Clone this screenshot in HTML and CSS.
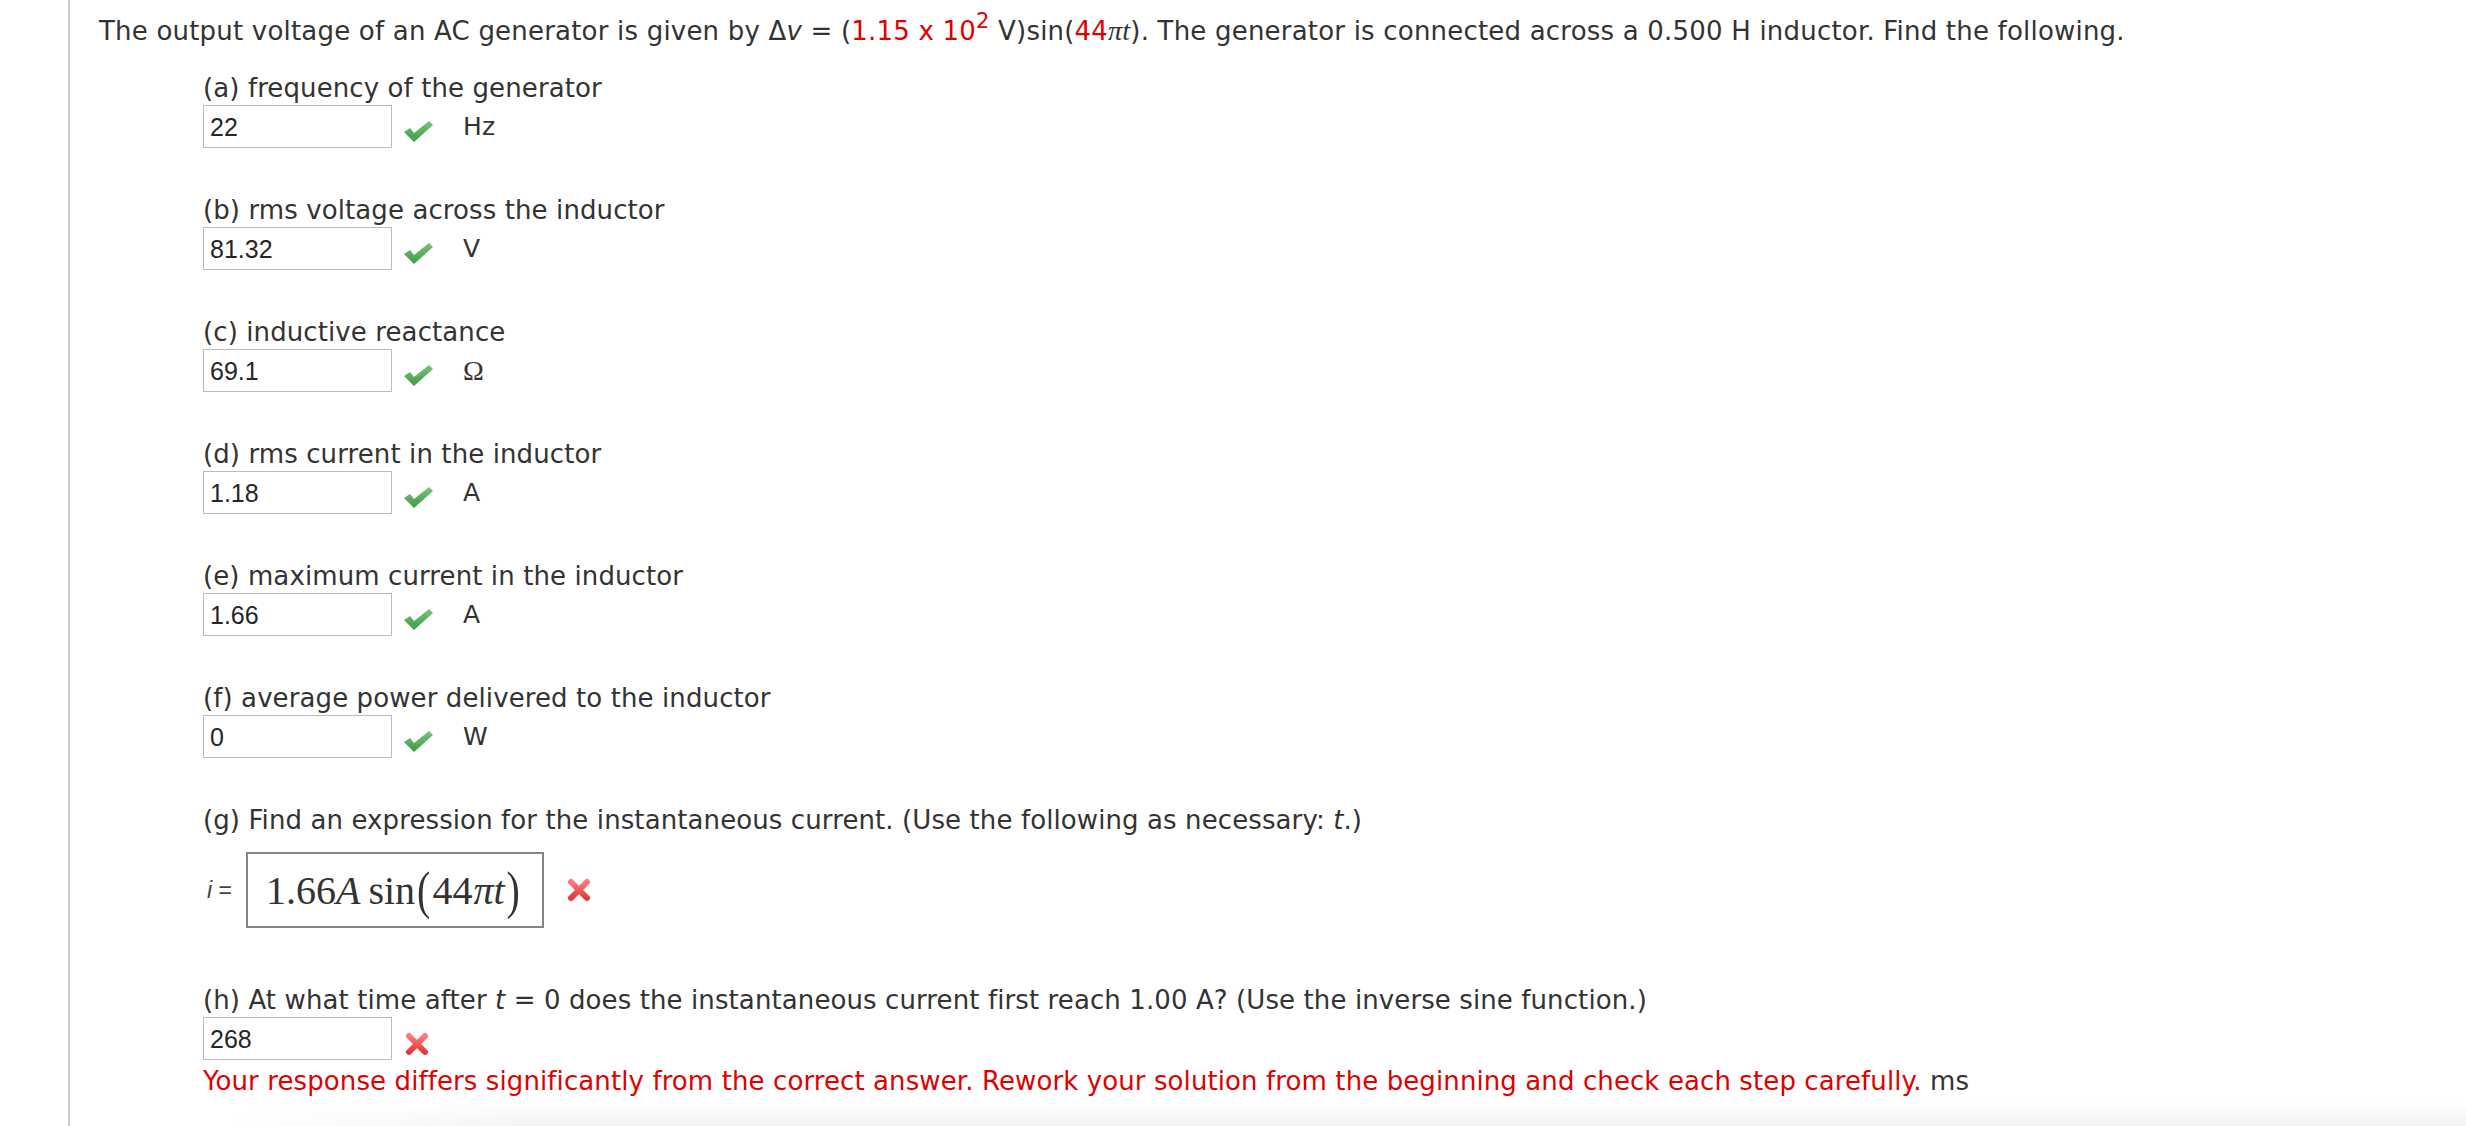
FILE: index.html
```html
<!DOCTYPE html>
<html>
<head>
<meta charset="utf-8">
<link rel="stylesheet" href="styles.css">
</head>
<body>
<div class="page">
  <div class="rule"></div>
  <div class="content">
    <p class="question">The output voltage of an AC generator is given by Δ<i>v</i> = (<span class="red">1.15 x 10<sup>2</sup></span> V)sin(<span class="red">44</span><span class="mvar">πt</span>). The generator is connected across a 0.500 H inductor. Find the following.</p>

    <div class="parts">
      <div class="part">
        <div class="label">(a) frequency of the generator</div>
        <div class="answer">
          <div class="input">22</div>
          <svg class="check" viewBox="0 0 32 26"><defs><linearGradient id="g1" x1="0" y1="0" x2="0" y2="1"><stop offset="0" stop-color="#7cc47c"/><stop offset="1" stop-color="#3e9a45"/></linearGradient></defs><path d="M2 14 L8 10 L12 15 L27 3 L31 7 L12 24 Z" fill="url(#g1)"/></svg>
          <span class="unit">Hz</span>
        </div>
      </div>

      <div class="part">
        <div class="label">(b) rms voltage across the inductor</div>
        <div class="answer">
          <div class="input">81.32</div>
          <svg class="check" viewBox="0 0 32 26"><path d="M2 14 L8 10 L12 15 L27 3 L31 7 L12 24 Z" fill="url(#g1)"/></svg>
          <span class="unit">V</span>
        </div>
      </div>

      <div class="part">
        <div class="label">(c) inductive reactance</div>
        <div class="answer">
          <div class="input">69.1</div>
          <svg class="check" viewBox="0 0 32 26"><path d="M2 14 L8 10 L12 15 L27 3 L31 7 L12 24 Z" fill="url(#g1)"/></svg>
          <span class="unit serif">Ω</span>
        </div>
      </div>

      <div class="part">
        <div class="label">(d) rms current in the inductor</div>
        <div class="answer">
          <div class="input">1.18</div>
          <svg class="check" viewBox="0 0 32 26"><path d="M2 14 L8 10 L12 15 L27 3 L31 7 L12 24 Z" fill="url(#g1)"/></svg>
          <span class="unit">A</span>
        </div>
      </div>

      <div class="part">
        <div class="label">(e) maximum current in the inductor</div>
        <div class="answer">
          <div class="input">1.66</div>
          <svg class="check" viewBox="0 0 32 26"><path d="M2 14 L8 10 L12 15 L27 3 L31 7 L12 24 Z" fill="url(#g1)"/></svg>
          <span class="unit">A</span>
        </div>
      </div>

      <div class="part">
        <div class="label">(f) average power delivered to the inductor</div>
        <div class="answer">
          <div class="input">0</div>
          <svg class="check" viewBox="0 0 32 26"><path d="M2 14 L8 10 L12 15 L27 3 L31 7 L12 24 Z" fill="url(#g1)"/></svg>
          <span class="unit">W</span>
        </div>
      </div>

      <div class="part part-g">
        <div class="label">(g) Find an expression for the instantaneous current. (Use the following as necessary: <i>t</i>.)</div>
        <div class="math-row">
          <span class="ieq"><i>i</i> =</span>
          <div class="mathbox"><span>1.66</span><i>A</i><span class="sin">sin</span><span class="paren">(</span><span>44</span><span class="pi">π</span><i>t</i><span class="paren">)</span></div>
          <svg class="cross" viewBox="0 0 26 26"><defs><linearGradient id="r1" x1="0" y1="0" x2="0" y2="1"><stop offset="0" stop-color="#ff7a7a"/><stop offset="1" stop-color="#e23a3a"/></linearGradient></defs><path d="M5 5 L21 21 M21 5 L5 21" stroke="url(#r1)" stroke-width="6" stroke-linecap="round"/></svg>
        </div>
      </div>

      <div class="part part-h">
        <div class="label">(h) At what time after <i>t</i> = 0 does the instantaneous current first reach 1.00 A? (Use the inverse sine function.)</div>
        <div class="answer">
          <div class="input">268</div>
          <svg class="cross cross-h" viewBox="0 0 26 26"><path d="M5 5 L21 21 M21 5 L5 21" stroke="url(#r1)" stroke-width="6" stroke-linecap="round"/></svg>
        </div>
        <div class="feedback"><span class="red">Your response differs significantly from the correct answer. Rework your solution from the beginning and check each step carefully.</span> ms</div>
      </div>
    </div>
    <div class="shade"></div>
  </div>
</div>
</body>
</html>
```

FILE: styles.css
```css
html, body {
  margin: 0;
  padding: 0;
  background: #ffffff;
}

body {
  font-family: "DejaVu Sans", Verdana, sans-serif;
  font-size: 26px;
  color: #333333;
  height: 1126px;
  overflow: hidden;
  letter-spacing: 0.1px;
}

.page {
  display: flex;
  height: 1126px;
}

.rule {
  width: 2px;
  margin-left: 68px;
  background: #cccccc;
  flex: none;
}

.content {
  flex: 1;
  padding-left: 29px;
  display: flex;
  flex-direction: column;
}

.question {
  margin: 16px 0 0 0;
  line-height: 30px;
  white-space: nowrap;
  letter-spacing: 0.2px;
}

.question sup {
  font-size: 21px;
  line-height: 0;
  vertical-align: 12px;
}

.question .mvar {
  font-family: "Liberation Serif", "DejaVu Serif", serif;
  font-style: italic;
  font-size: 28px;
}

.red {
  color: #e00000;
}

.parts {
  margin-top: 27px;
  padding-left: 104px;
}

.part {
  margin-bottom: 47px;
}

.label {
  line-height: 30px;
  white-space: nowrap;
}

.answer {
  margin-top: 2px;
  display: flex;
  align-items: center;
  height: 43px;
}

.input {
  box-sizing: border-box;
  width: 189px;
  height: 43px;
  border: 1px solid #bcbcbc;
  padding: 0 6px;
  font-family: "Liberation Sans", Arial, sans-serif;
  font-size: 25px;
  line-height: 43px;
  color: #262626;
  flex: none;
  letter-spacing: 0;
}

.check {
  width: 32px;
  height: 26px;
  margin-left: 10px;
  margin-top: 9px;
  flex: none;
}

.unit {
  margin-left: 29px;
  font-family: "DejaVu Sans", Verdana, sans-serif;
  font-size: 25px;
  line-height: 43px;
}

.unit.serif {
  font-family: "Liberation Serif", "DejaVu Serif", serif;
  font-size: 28px;
}

.part-g {
  margin-bottom: 57px;
}

.math-row {
  margin-top: 17px;
  display: flex;
  align-items: center;
  padding-left: 4px;
}

.ieq {
  font-family: "Liberation Sans", Arial, sans-serif;
  font-size: 23px;
  color: #444;
  margin-right: 14px;
  letter-spacing: 0;
}

.mathbox {
  box-sizing: border-box;
  height: 76px;
  width: 298px;
  border: 2px solid #858585;
  padding-left: 18px;
  display: flex;
  align-items: center;
  font-family: "Liberation Serif", "Times New Roman", serif;
  font-size: 40px;
  color: #333;
  white-space: nowrap;
  letter-spacing: 0;
}

.mathbox i {
  font-style: italic;
}

.mathbox .sin {
  margin-left: 8px;
}

.mathbox .paren {
  display: inline-block;
  transform: scaleY(1.3);
  margin: 0 2px;
}

.mathbox .pi {
  font-family: "Liberation Serif", serif;
  font-style: italic;
  font-size: 40px;
  margin-left: 1px;
}

.cross {
  width: 26px;
  height: 26px;
  margin-left: 22px;
  flex: none;
}

.cross-h {
  margin-left: 12px;
  margin-top: 10px;
}

.part-h {
  margin-bottom: 0;
}

.feedback {
  margin-top: 6px;
  line-height: 30px;
  white-space: nowrap;
}

.shade {
  flex: 1;
  margin-left: 120px;
  margin-top: 6px;
  background: linear-gradient(to bottom, #ffffff, #f4f4f4);
  -webkit-mask-image: linear-gradient(to right, transparent, #000 300px);
  mask-image: linear-gradient(to right, transparent, #000 300px);
}
```
